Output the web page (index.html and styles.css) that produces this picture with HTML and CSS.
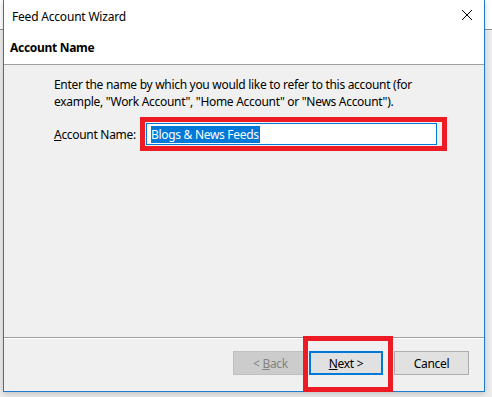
FILE: index.html
```html
<!DOCTYPE html>
<html>
<head>
<meta charset="utf-8">
<link rel="stylesheet" href="styles.css">
</head>
<body>
<div class="window">
  <div class="titlebar">
    <span class="title">Feed Account Wizard</span>
    <svg class="close" width="12" height="12" viewBox="0 0 12 12"><path d="M1 1 L11 11 M11 1 L1 11" stroke="#000" stroke-width="1" fill="none"/></svg>
  </div>
  <div class="header">Account Name</div>
  <div class="content">
    <p class="desc">Enter the name by which you would like to refer to this account (for example, "Work Account", "Home Account" or "News Account").</p>
    <div class="field">
      <span class="label"><u>A</u>ccount Name:</span>
      <div class="input"><span class="sel">Blogs &amp; News Feeds</span></div>
      <div class="mark mark-input"></div>
    </div>
  </div>
  <div class="footer">
    <div class="btn disabled"><span>&lt;&nbsp;<u>B</u>ack</span></div>
    <div class="btn default"><span><u>N</u>ext &gt;</span></div>
    <div class="btn cancel"><span>Cancel</span></div>
    <div class="mark mark-next"></div>
  </div>
</div>
</body>
</html>
```
FILE: styles.css
```css
html, body { margin: 0; padding: 0; }
body {
  width: 492px;
  height: 397px;
  overflow: hidden;
  font-family: "Noto Sans", "Open Sans", sans-serif;
  font-size: 12px;
  letter-spacing: -0.3px;
  color: #000;
  background: linear-gradient(to bottom, #ffffff 0, #ffffff 29px, #8c8c8c 29px, #8c8c8c 30px, #ececec 30px);
}
.window {
  position: relative;
  margin-left: 3px;
  width: 482px;
  height: 392px;
  border: 1px solid #1a7bd0;
  border-top: none;
  background: #f0f0f0;
  display: flex;
  flex-direction: column;
  box-sizing: border-box;
  box-shadow: 0 2px 6px rgba(0,0,0,0.18);
}
.titlebar {
  height: 30px;
  background: #fff;
  display: flex;
  align-items: center;
  justify-content: space-between;
  padding: 0 11px 0 8px;
  flex: none;
}
.title { font-size: 12px; position: relative; top: 1px; letter-spacing: -0.2px; }
.close { display: block; }
.header {
  height: 34px;
  background: #fff;
  border-bottom: 1px solid #a0a0a0;
  padding-left: 6px;
  font-weight: bold;
  display: flex;
  align-items: center;
  flex: none;
}
.content {
  flex: 1;
  padding: 11px 0 0 50px;
  border-bottom: 1px solid #a0a0a0;
  box-shadow: 0 1px 0 #fff;
  position: relative;
}
.desc {
  margin: 0;
  line-height: 17px;
  width: 380px;
}
.field {
  display: flex;
  align-items: center;
  margin-top: 13px;
  position: relative;
}
.label { width: 92px; flex: none; }
.input {
  width: 291px;
  height: 22px;
  box-sizing: border-box;
  border: 1px solid #0078d7;
  background: #fff;
  padding: 1px 0 1px 4px;
  display: flex;
  align-items: center;
}
.sel {
  background: #0078d7;
  color: #fff;
  line-height: 17px;
  padding-right: 1px;
}
.mark {
  position: absolute;
  border: 5px solid #ed1c24;
  box-sizing: border-box;
  pointer-events: none;
}
.mark-input {
  left: 86px;
  top: -6px;
  width: 307px;
  height: 34px;
}
.footer {
  height: 52px;
  margin-top: 1px;
  flex: none;
  display: flex;
  align-items: flex-start;
  padding: 12px 0 0 229px;
  box-sizing: border-box;
  position: relative;
}
.btn {
  height: 24px;
  box-sizing: border-box;
  border: 1px solid #adadad;
  background: #e1e1e1;
  display: flex;
  align-items: center;
  justify-content: center;
  flex: none;
}
.btn.disabled {
  width: 75px;
  background: #cccccc;
  border-color: #bfbfbf;
  color: #838383;
}
.btn.default {
  width: 74px;
  margin-left: 1px;
  border: 2px solid #0078d7;
}
.btn.cancel {
  width: 75px;
  margin-left: 11px;
}
.mark-next {
  left: 299px;
  top: -3px;
  width: 90px;
  height: 56px;
}
```
